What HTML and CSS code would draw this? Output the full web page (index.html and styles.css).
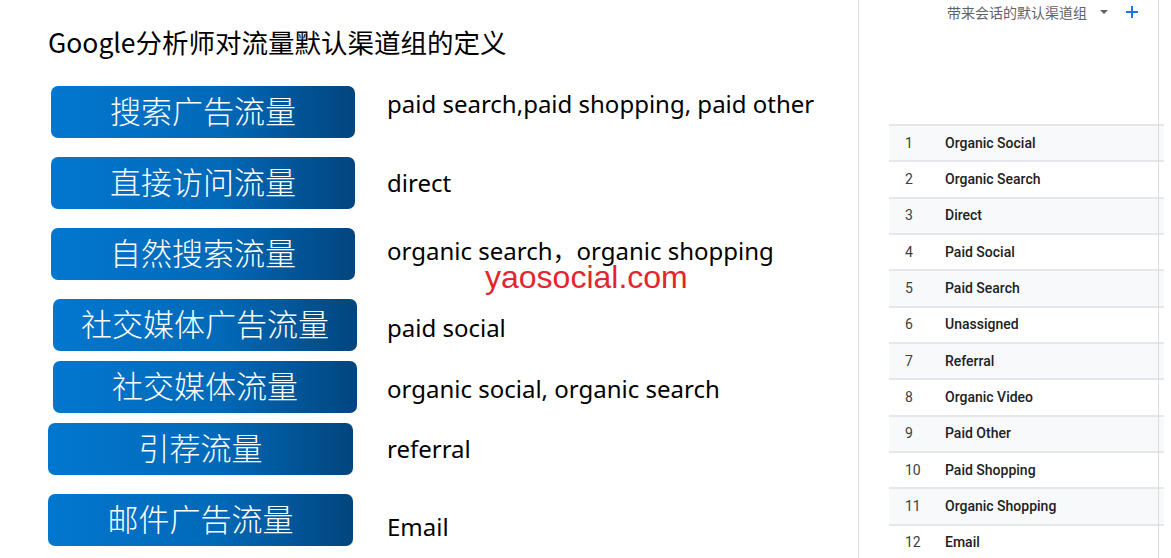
FILE: index.html
```html
<!DOCTYPE html>
<html lang="zh-CN">
<head>
    <meta charset="UTF-8">
    <meta name="viewport" content="width=device-width, initial-scale=1.0">
    <title>默认渠道组</title>
    <link rel="stylesheet" href="styles.css">
</head>
<body>

    <main class="page">
        <section class="slide">
            <h1 class="slide-title">Google分析师对流量默认渠道组的定义</h1>

            <ul class="channel-list">
                <li class="channel channel--first">
                    <span class="channel-tag">搜索广告流量</span>
                    <span class="channel-desc desc-up-8">paid search,paid shopping, paid other</span>
                </li>
                <li class="channel">
                    <span class="channel-tag">直接访问流量</span>
                    <span class="channel-desc">direct</span>
                </li>
                <li class="channel">
                    <span class="channel-tag">自然搜索流量</span>
                    <span class="channel-desc desc-up-3">organic search，organic shopping</span>
                </li>
                <li class="channel channel--tight">
                    <span class="channel-tag tag-shift-right">社交媒体广告流量</span>
                    <span class="channel-desc desc-down-3">paid social</span>
                </li>
                <li class="channel channel--close">
                    <span class="channel-tag tag-shift-right">社交媒体流量</span>
                    <span class="channel-desc desc-down-2">organic social, organic search</span>
                </li>
                <li class="channel channel--close">
                    <span class="channel-tag tag-shift-left">引荐流量</span>
                    <span class="channel-desc">referral</span>
                </li>
                <li class="channel">
                    <span class="channel-tag tag-shift-left">邮件广告流量</span>
                    <span class="channel-desc desc-down-7">Email</span>
                </li>
            </ul>

            <span class="watermark">yaosocial.com</span>
        </section>

        <section class="report">
            <div class="report-head">
                <span class="report-dim">带来会话的默认渠道组</span>
                <span class="report-caret"></span>
                <svg class="report-add" width="14" height="14" viewBox="0 0 14 14">
                    <path d="M7 1v12M1 7h12" stroke="#1a73e8" stroke-width="2" fill="none"/>
                </svg>
            </div>

            <ol class="report-rows">
                <li class="report-row"><span class="row-num">1</span><span class="row-label">Organic Social</span></li>
                <li class="report-row"><span class="row-num">2</span><span class="row-label">Organic Search</span></li>
                <li class="report-row"><span class="row-num">3</span><span class="row-label">Direct</span></li>
                <li class="report-row"><span class="row-num">4</span><span class="row-label">Paid Social</span></li>
                <li class="report-row"><span class="row-num">5</span><span class="row-label">Paid Search</span></li>
                <li class="report-row"><span class="row-num">6</span><span class="row-label">Unassigned</span></li>
                <li class="report-row"><span class="row-num">7</span><span class="row-label">Referral</span></li>
                <li class="report-row"><span class="row-num">8</span><span class="row-label">Organic Video</span></li>
                <li class="report-row"><span class="row-num">9</span><span class="row-label">Paid Other</span></li>
                <li class="report-row"><span class="row-num">10</span><span class="row-label">Paid Shopping</span></li>
                <li class="report-row"><span class="row-num">11</span><span class="row-label">Organic Shopping</span></li>
                <li class="report-row"><span class="row-num">12</span><span class="row-label">Email</span></li>
            </ol>
        </section>
    </main>

</body>
</html>
```

FILE: styles.css
```css
* {
    margin: 0;
    padding: 0;
    box-sizing: border-box;
}

body {
    background: #fff;
    height: 100vh;
    overflow: hidden;
}

.page {
    display: flex;
    height: 558px;
}

/* Left: slide with channel definitions */
.slide {
    position: relative;
    width: 858px;
    flex: none;
    padding-top: 26px;
    font-family: "Noto Sans", "Noto Sans CJK SC", sans-serif;
    color: #000;
}

.slide-title {
    margin-left: 48px;
    font-size: 26.5px;
    line-height: 32px;
    font-weight: 400;
    font-family: "Noto Sans CJK SC", sans-serif;
}

.channel-list {
    list-style: none;
    margin-top: 28px;
}

.channel {
    display: grid;
    grid-template-columns: 387px auto;
    align-items: center;
    margin-top: 19px;
}

.channel--first {
    margin-top: 0;
}

.channel--tight {
    margin-top: 19px;
}

.channel--close {
    margin-top: 10px;
}

.channel-tag {
    display: flex;
    justify-content: center;
    align-items: center;
    width: 304px;
    height: 52px;
    margin-left: 51px;
    padding-bottom: 5px;
    border-radius: 7px;
    background: linear-gradient(90deg, #0277cf 0%, #0169b8 55%, #02457e 100%);
    color: #fff;
    font-family: "Noto Sans CJK SC", sans-serif;
    font-weight: 300;
    font-size: 31px;
}

.tag-shift-right {
    margin-left: 53px;
}

.tag-shift-left {
    margin-left: 48px;
    width: 305px;
}

.channel-desc {
    font-size: 24px;
    line-height: 30px;
    white-space: nowrap;
}

.desc-up-8 { margin-bottom: 16px; }
.desc-up-3 { margin-bottom: 6px; }
.desc-down-2 { margin-top: 4px; }
.desc-down-3 { margin-top: 6px; }
.desc-down-7 { margin-top: 14px; }

.watermark {
    position: absolute;
    left: 485px;
    top: 261px;
    font-family: "Liberation Sans", Arial, sans-serif;
    font-size: 32px;
    line-height: 32px;
    color: #e3262e;
}

/* Right: analytics report table */
.report {
    position: relative;
    width: 301px;
    flex: none;
    border-left: 1px solid #dadce0;
    padding-left: 30px;
    font-family: Roboto, "Noto Sans CJK SC", sans-serif;
}

.report::after {
    content: "";
    position: absolute;
    top: 0;
    bottom: 0;
    right: 0;
    width: 1px;
    background: #dadce0;
}

.report-head {
    display: flex;
    justify-content: flex-end;
    align-items: center;
    height: 24px;
    padding-right: 20px;
    color: #5f6368;
}

.report-dim {
    font-size: 14px;
}

.report-caret {
    width: 0;
    height: 0;
    margin-left: 13px;
    border-left: 4px solid transparent;
    border-right: 4px solid transparent;
    border-top: 4px solid #5f6368;
}

.report-add {
    margin-left: 17px;
}

.report-rows {
    list-style: none;
    margin-top: 100px;
    margin-right: -5px;
}

.report-row {
    display: flex;
    align-items: center;
    height: 36.33px;
    border-top: 2px solid #e6e7ea;
    padding-bottom: 1px;
    font-size: 14px;
    color: #3c4043;
}

.report-row:nth-child(odd) {
    background: #f8f9fa;
}

.row-num {
    width: 56px;
    padding-left: 16px;
    font-weight: 400;
}

.row-label {
    font-weight: 500;
    color: #202124;
}
```
